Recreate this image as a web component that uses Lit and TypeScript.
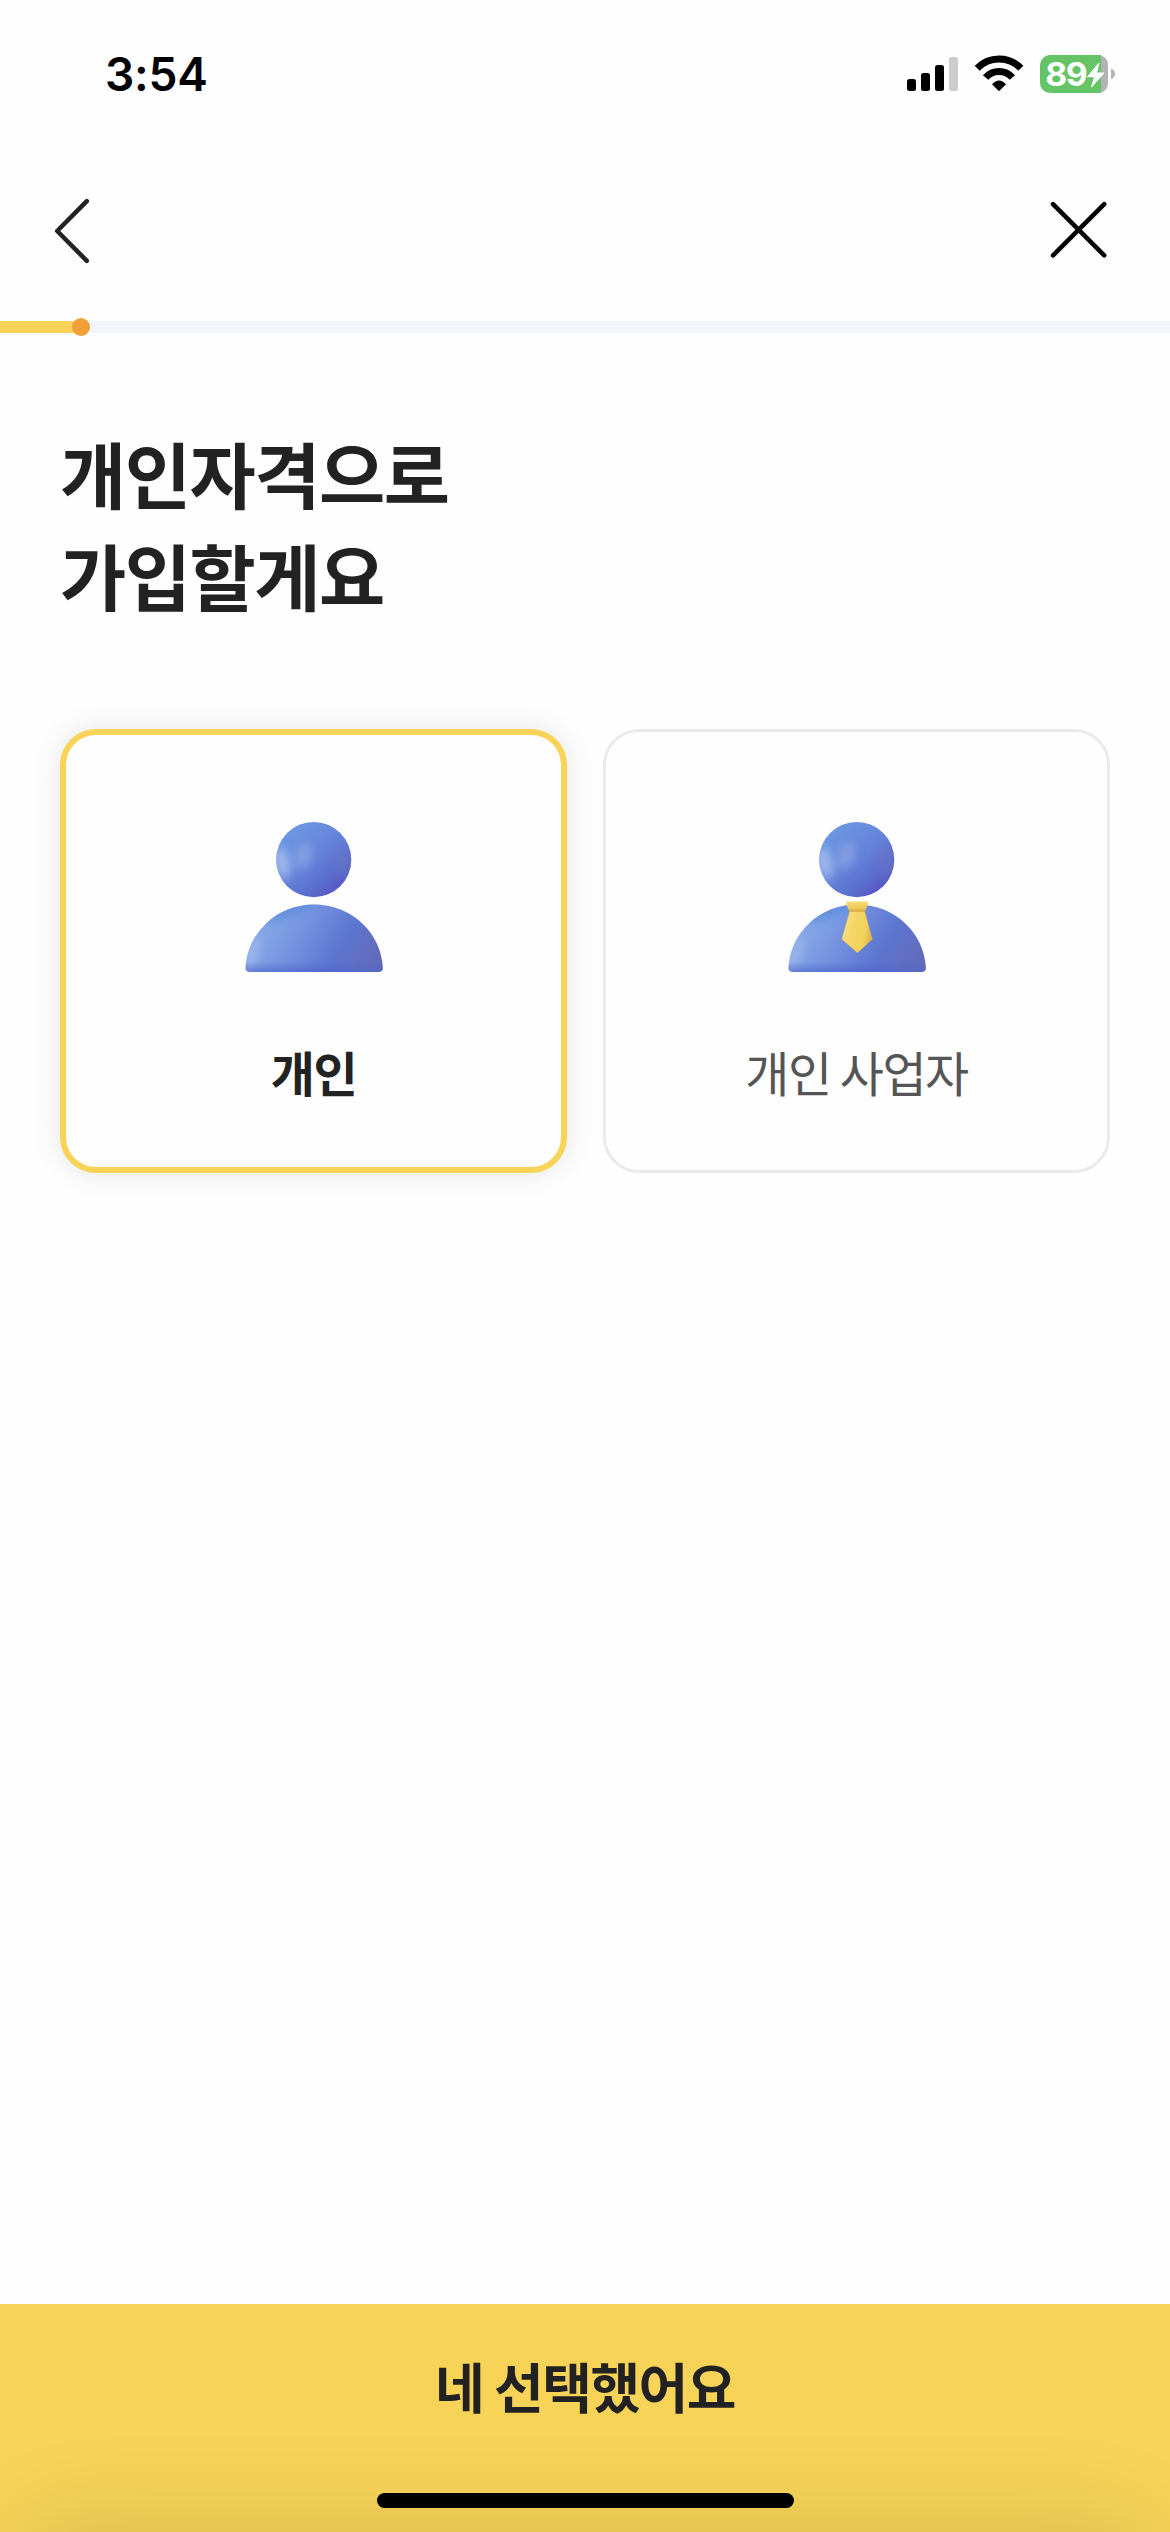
import { LitElement, html, css, svg, nothing } from "lit";
import { customElement, property, state } from "lit/decorators.js";
import { classMap } from "lit/directives/class-map.js";

@customElement("status-bar")
class StatusBar extends LitElement {
  static styles = css`
    :host {
      display: flex;
      justify-content: space-between;
      align-items: flex-start;
      height: 150px;
      padding: 44px 50px 0 105px;
      box-sizing: border-box;
    }
    .time {
      font: 600 46px/60px Inter, "Liberation Sans", sans-serif;
      letter-spacing: -0.2px;
      color: #000;
    }
    .icons {
      display: block;
      margin-top: 6px;
    }
    .level {
      font: 700 33px Inter, "Liberation Sans", sans-serif;
      fill: #fff;
    }
  `;

  render() {
    return html`
      <div class="time">3:54</div>
      <svg class="icons" width="215" height="50" viewBox="905 50 215 50">
        <rect x="907" y="79" width="9" height="12" rx="2.5" />
        <rect x="921" y="73" width="9" height="18" rx="2.5" />
        <rect x="935" y="65" width="9" height="26" rx="2.5" />
        <rect x="949" y="57" width="9" height="34" rx="2.5" fill="#ccc" />
        <g fill="none" stroke="#000" stroke-width="7">
          <path d="M977.2 68.2A30.3 30.3 0 0 1 1020.8 68.2" />
          <path d="M985.6 77.6A17.6 17.6 0 0 1 1012.4 77.6" />
        </g>
        <path d="M992 84.2Q999 76.6 1006 84.2L999.8 90.6Q999 91.4 998.2 90.6Z" />
        <path d="M1050 55H1101V93H1050A10 10 0 0 1 1040 83V65A10 10 0 0 1 1050 55Z" fill="#65c466" />
        <path d="M1101 55.4Q1108 57.5 1108 65V83Q1108 90.5 1101 92.6Z" fill="#b3b3b3" />
        <path d="M1111 68.6Q1115 70.5 1115 74T1111 79.400Z" fill="#b3b3b3" />
        <text class="level" x="1045.2" y="86" textLength="41" lengthAdjust="spacingAndGlyphs">89</text>
        <path d="M1099 63L1087.5 76.7H1094.5L1091.5 87L1104 73H1096.5Z" fill="#fff" stroke="#fff" stroke-width="1" stroke-linejoin="round" />
      </svg>
    `;
  }
}

@customElement("person-icon")
class PersonIcon extends LitElement {
  @property({ type: Boolean }) tie = false;

  static styles = css`
    :host {
      display: block;
      width: 150px;
      height: 150px;
    }
    svg {
      display: block;
    }
  `;

  render() {
    return html`
      <svg width="150" height="150" viewBox="0 0 150 150">
        <defs>
          <linearGradient id="head" x1="0.15" y1="0.15" x2="0.8" y2="0.9">
            <stop offset="0" stop-color="#6c97e2" />
            <stop offset="0.5" stop-color="#6481d9" />
            <stop offset="0.8" stop-color="#5b6dce" />
            <stop offset="1" stop-color="#5755c3" />
          </linearGradient>
          <linearGradient id="body" x1="0" y1="0.35" x2="1" y2="0.65">
            <stop offset="0" stop-color="#8fb0ea" />
            <stop offset="0.25" stop-color="#7e9fe3" />
            <stop offset="0.45" stop-color="#718dde" />
            <stop offset="0.7" stop-color="#5d76d0" />
            <stop offset="1" stop-color="#636bbb" />
          </linearGradient>
          <linearGradient id="base" x1="0" y1="0" x2="0" y2="1">
            <stop offset="0.85" stop-color="#4a67cc" stop-opacity="0" />
            <stop offset="1" stop-color="#4a62cc" stop-opacity="0.6" />
          </linearGradient>
          <linearGradient id="gold" x1="0" y1="0.3" x2="1" y2="0.6">
            <stop offset="0" stop-color="#fae193" />
            <stop offset="0.35" stop-color="#f5d666" />
            <stop offset="0.75" stop-color="#f3d25c" />
            <stop offset="1" stop-color="#d9b04c" />
          </linearGradient>
          <linearGradient id="knot" x1="0" y1="0" x2="0" y2="1">
            <stop offset="0" stop-color="#f9da76" />
            <stop offset="0.6" stop-color="#f0cb5a" />
            <stop offset="1" stop-color="#d3a842" />
          </linearGradient>
          <filter id="soft" x="-150%" y="-150%" width="400%" height="400%">
            <feGaussianBlur stdDeviation="5" />
          </filter>
          <clipPath id="headClip"><circle cx="74.7" cy="37.6" r="37.6" /></clipPath>
          <clipPath id="bodyClip">
            <path d="M6.5 146A68.7 66 0 0 1 143.8 146Q143.8 150 139 150H11.5Q6.5 150 6.5 146Z" />
          </clipPath>
        </defs>
        <g clip-path="url(#headClip)">
          <rect x="36" width="78" height="76" fill="url(#head)" />
          <ellipse cx="43" cy="41" rx="8" ry="16" fill="#b0c6f1" opacity="0.75" filter="url(#soft)" transform="rotate(-12 43 41)" />
          <ellipse cx="64" cy="34" rx="9" ry="14" fill="#94abe7" opacity="0.6" filter="url(#soft)" transform="rotate(20 64 34)" />
          <ellipse cx="104" cy="41" rx="7" ry="15" fill="#6c77c2" opacity="0.6" filter="url(#soft)" />
        </g>
        <g clip-path="url(#bodyClip)">
          <rect x="5" y="79" width="140" height="71" fill="url(#body)" />
          <ellipse cx="54" cy="84" rx="34" ry="9" fill="#5889dd" opacity="0.75" filter="url(#soft)" transform="rotate(-22 54 84)" />
          <ellipse cx="12" cy="134" rx="7" ry="20" fill="#adc3ef" opacity="0.5" filter="url(#soft)" transform="rotate(20 12 134)" />
          <rect x="5" y="79" width="140" height="71" fill="url(#base)" />
        </g>
        ${this.tie
          ? svg`
            <path d="M67.8 89H82.5L90.2 117.3L75.5 130.7L59.8 117.3Z" fill="url(#gold)" stroke="#dfb955" stroke-width="0.5" stroke-linejoin="round" />
            <path d="M64.2 79.5H86Q86 84 82.8 89.8H67.6Q64.2 84 64.2 79.5Z" fill="url(#knot)" />`
          : nothing}
      </svg>
    `;
  }
}

interface Option {
  label: string;
  tie: boolean;
}

@customElement("app-root")
class AppRoot extends LitElement {
  @state() private selected = 0;

  private options: Option[] = [
    { label: "개인", tie: false },
    { label: "개인 사업자", tie: true },
  ];

  static styles = css`
    :host {
      display: flex;
      flex-direction: column;
      width: 1170px;
      height: 2532px;
      overflow: hidden;
      background: #fefefe;
      color: #222;
      font-family: "Noto Sans CJK KR", sans-serif;
      letter-spacing: -1.5px;
    }
    button {
      font: inherit;
      letter-spacing: inherit;
      color: inherit;
      margin: 0;
      padding: 0;
      border: 0;
      background: none;
    }
    svg {
      display: block;
    }
    .nav {
      display: flex;
      justify-content: space-between;
      align-items: center;
      height: 171px;
      box-sizing: border-box;
      padding: 0 60px 9px 51px;
    }
    .nav path {
      fill: none;
      stroke-width: 4.5px;
      stroke-linecap: round;
      stroke-linejoin: round;
    }
    .back {
      stroke: #222;
    }
    .close {
      stroke: #000;
    }
    .progress {
      display: flex;
      align-items: center;
      height: 12px;
      background: #f4f5fa;
    }
    .bar {
      width: 81px;
      height: 12px;
      background: #f7d358;
    }
    .dot {
      flex: none;
      width: 18px;
      height: 18px;
      margin-left: -9px;
      border-radius: 50%;
      background: #f19f38;
    }
    .main {
      flex: 1;
      padding: 88px 60px 0;
    }
    h1 {
      margin: 0;
      font-size: 72px;
      line-height: 102px;
      font-weight: 700;
    }
    .cards {
      display: grid;
      grid-template-columns: 1fr 1fr;
      gap: 36px;
      margin-top: 104px;
    }
    .card {
      display: flex;
      flex-direction: column;
      align-items: center;
      gap: 63px;
      height: 444px;
      box-sizing: border-box;
      padding-top: 90px;
      border: 3px solid #e9eaeb;
      border-radius: 36px;
      background: #fefefe;
      color: #555;
      font-size: 48px;
      line-height: 72px;
    }
    .card.on {
      padding-top: 87px;
      border: 6px solid #f7d358;
      color: #222;
      font-weight: 700;
      box-shadow: 0 0 30px rgba(0, 0, 0, 0.1);
    }
    .footer {
      position: relative;
      display: flex;
      flex-direction: column;
      align-items: center;
      justify-content: space-between;
      height: 228px;
      box-sizing: border-box;
      padding: 42px 0 24px;
      overflow: hidden;
      background: #f7d358;
    }
    .shade {
      position: absolute;
      left: 30px;
      right: 30px;
      top: 100%;
      height: 200px;
      box-shadow: 0 0 105px rgba(0, 0, 0, 0.135);
    }
    .submit {
      font-size: 54px;
      line-height: 80px;
      font-weight: 700;
    }
    .home {
      width: 417px;
      height: 15px;
      border-radius: 8px;
      background: #000;
      z-index: 1;
    }
  `;

  render() {
    return html`
      <status-bar></status-bar>
      <div class="nav">
        <button aria-label="뒤로">
          <svg width="42" height="72" viewBox="51 195 42 72">
            <path class="back" d="M86.8 201.2L57.2 231L86.8 260.8" />
          </svg>
        </button>
        <button aria-label="닫기">
          <svg width="63" height="63" viewBox="1047 199.5 63 63">
            <path class="close" d="M1053 203.7L1104.2 254.9M1104.2 203.7L1053 254.9" />
          </svg>
        </button>
      </div>
      <div class="progress">
        <div class="bar"></div>
        <div class="dot"></div>
      </div>
      <div class="main">
        <h1>개인자격으로<br />가입할게요</h1>
        <div class="cards">
          ${this.options.map(
            (o, i) => html`
              <button
                class=${classMap({ card: true, on: i === this.selected })}
                @click=${() => (this.selected = i)}
              >
                <person-icon ?tie=${o.tie}></person-icon>
                <span>${o.label}</span>
              </button>
            `,
          )}
        </div>
      </div>
      <div class="footer">
        <div class="shade"></div>
        <button class="submit">네 선택했어요</button>
        <div class="home"></div>
      </div>
    `;
  }
}
